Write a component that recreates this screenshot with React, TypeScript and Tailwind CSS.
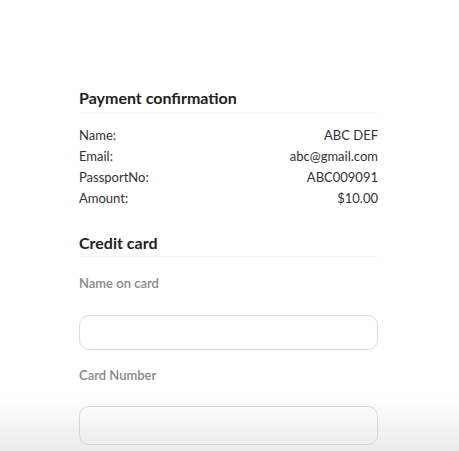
import React from "react";

const rows = [
  { label: "Name:", value: "ABC DEF" },
  { label: "Email:", value: "abc@gmail.com" },
  { label: "PassportNo:", value: "ABC009091" },
  { label: "Amount:", value: "$10.00" },
];

export default function App() {
  return (
    <div
      className="h-[451px] w-full overflow-hidden bg-[linear-gradient(to_bottom,#ffffff_0%,#ffffff_88%,#ebebeb_100%)] text-[#333]"
      style={{ fontFamily: "Lato, 'Open Sans', sans-serif" }}
    >
      <div className="ml-[79px] w-[299px] pt-[88px]">
        <h2 className="pb-[4px] border-b border-[#f9f9f9] text-[16px] leading-[20px] font-bold text-[#222]">
          Payment confirmation
        </h2>
        <div className="mt-[12px] flex flex-col">
          {rows.map((r) => (
            <div key={r.label} className="flex justify-between text-[13px] leading-[21px]">
              <span>{r.label}</span>
              <span>{r.value}</span>
            </div>
          ))}
        </div>
        <h2 className="mt-[24px] pb-[3px] border-b border-[#f6f6f6] text-[16px] leading-[20px] font-bold text-[#222]">
          Credit card
        </h2>
        <label className="mt-[18px] block text-[13px] leading-[16px] font-semibold text-[#888]">
          Name on card
        </label>
        <input className="mt-[24px] block h-[35px] w-full rounded-[10px] border border-[#dcdcdc] bg-transparent outline-none" />
        <label className="mt-[17px] block text-[13px] leading-[16px] font-semibold text-[#888]">
          Card Number
        </label>
        <input className="mt-[23px] block h-[39px] w-full rounded-[10px] border border-[#d6d6d6] bg-transparent outline-none" />
      </div>
    </div>
  );
}
